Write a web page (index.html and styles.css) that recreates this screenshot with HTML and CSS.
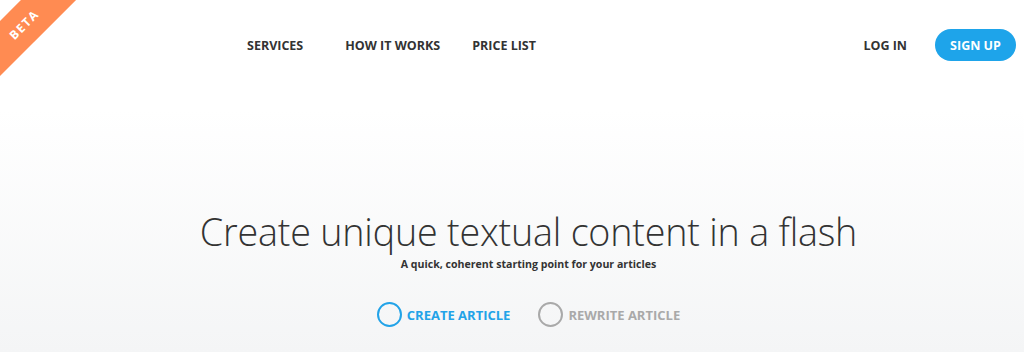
FILE: index.html
```html
<!DOCTYPE html>
<html>
<head>
<meta charset="utf-8">
<link rel="stylesheet" href="styles.css">
</head>
<body>
<div class="ribbon"><span>BETA</span></div>
<header class="header">
  <nav class="nav">
    <a class="nav-link">SERVICES</a>
    <a class="nav-link">HOW IT WORKS</a>
    <a class="nav-link">PRICE LIST</a>
  </nav>
  <div class="auth">
    <a class="login">LOG IN</a>
    <a class="signup">SIGN UP</a>
  </div>
</header>
<main class="hero">
  <h1 class="title">Create unique textual content in a flash</h1>
  <p class="subtitle">A quick, coherent starting point for your articles</p>
  <div class="options">
    <label class="option active"><span class="radio"></span><span class="opt-text">CREATE ARTICLE</span></label>
    <label class="option"><span class="radio"></span><span class="opt-text">REWRITE ARTICLE</span></label>
  </div>
</main>
</body>
</html>
```

FILE: styles.css
```css
* { box-sizing: border-box; }
html, body { margin: 0; padding: 0; }
body {
  width: 1024px;
  height: 352px;
  overflow: hidden;
  font-family: "Open Sans", "Liberation Sans", sans-serif;
  background: linear-gradient(to bottom, #ffffff 0px, #ffffff 110px, #f4f5f6 352px);
  position: relative;
  color: #333;
}
.ribbon {
  position: absolute;
  top: 0; left: 0;
  width: 80px; height: 80px;
  overflow: hidden;
}
.ribbon span {
  position: absolute;
  top: 5px; left: -46px;
  width: 140px;
  height: 39px;
  line-height: 39px;
  background: #ff8b52;
  color: #fff;
  font-weight: 700;
  font-size: 12px;
  letter-spacing: 1.5px;
  text-align: center;
  transform: rotate(-45deg);
}
.header {
  display: flex;
  align-items: center;
  justify-content: space-between;
  height: 90px;
  padding: 0 8px 0 247px;
}
.nav { display: flex; gap: 0; }
.nav-link {
  font-size: 12.5px;
  font-weight: 700;
  color: #333;
  margin-right: 42px;
}
.nav-link:nth-child(2) { margin-right: 32px; }
.auth { display: flex; align-items: center; }
.login {
  font-size: 12.5px;
  font-weight: 700;
  color: #333;
  margin-right: 28px;
}
.signup {
  display: flex;
  align-items: center;
  justify-content: center;
  width: 81px;
  height: 32px;
  border-radius: 16px;
  background: #1ea4ea;
  color: #fff;
  font-size: 12.5px;
  font-weight: 700;
}
.hero {
  display: flex;
  flex-direction: column;
  align-items: center;
  padding-top: 118px;
  padding-left: 33px;
}
.title {
  margin: 0;
  font-weight: 300;
  font-size: 37.7px;
  line-height: 48px;
  color: #333;
  letter-spacing: -0.2px;
}
.subtitle {
  margin: 0;
  font-size: 10.6px;
  font-weight: 700;
  line-height: 16px;
  color: #333;
}
.options {
  display: flex;
  gap: 28px;
  margin-top: 30px;
}
.option {
  display: flex;
  align-items: center;
  gap: 5px;
  color: #a9a9a9;
}
.option.active { color: #22a3e8; }
.radio {
  width: 25px;
  height: 25px;
  border-radius: 50%;
  border: 2px solid currentColor;
}
.opt-text {
  font-size: 13px;
  font-weight: 700;
}
```
